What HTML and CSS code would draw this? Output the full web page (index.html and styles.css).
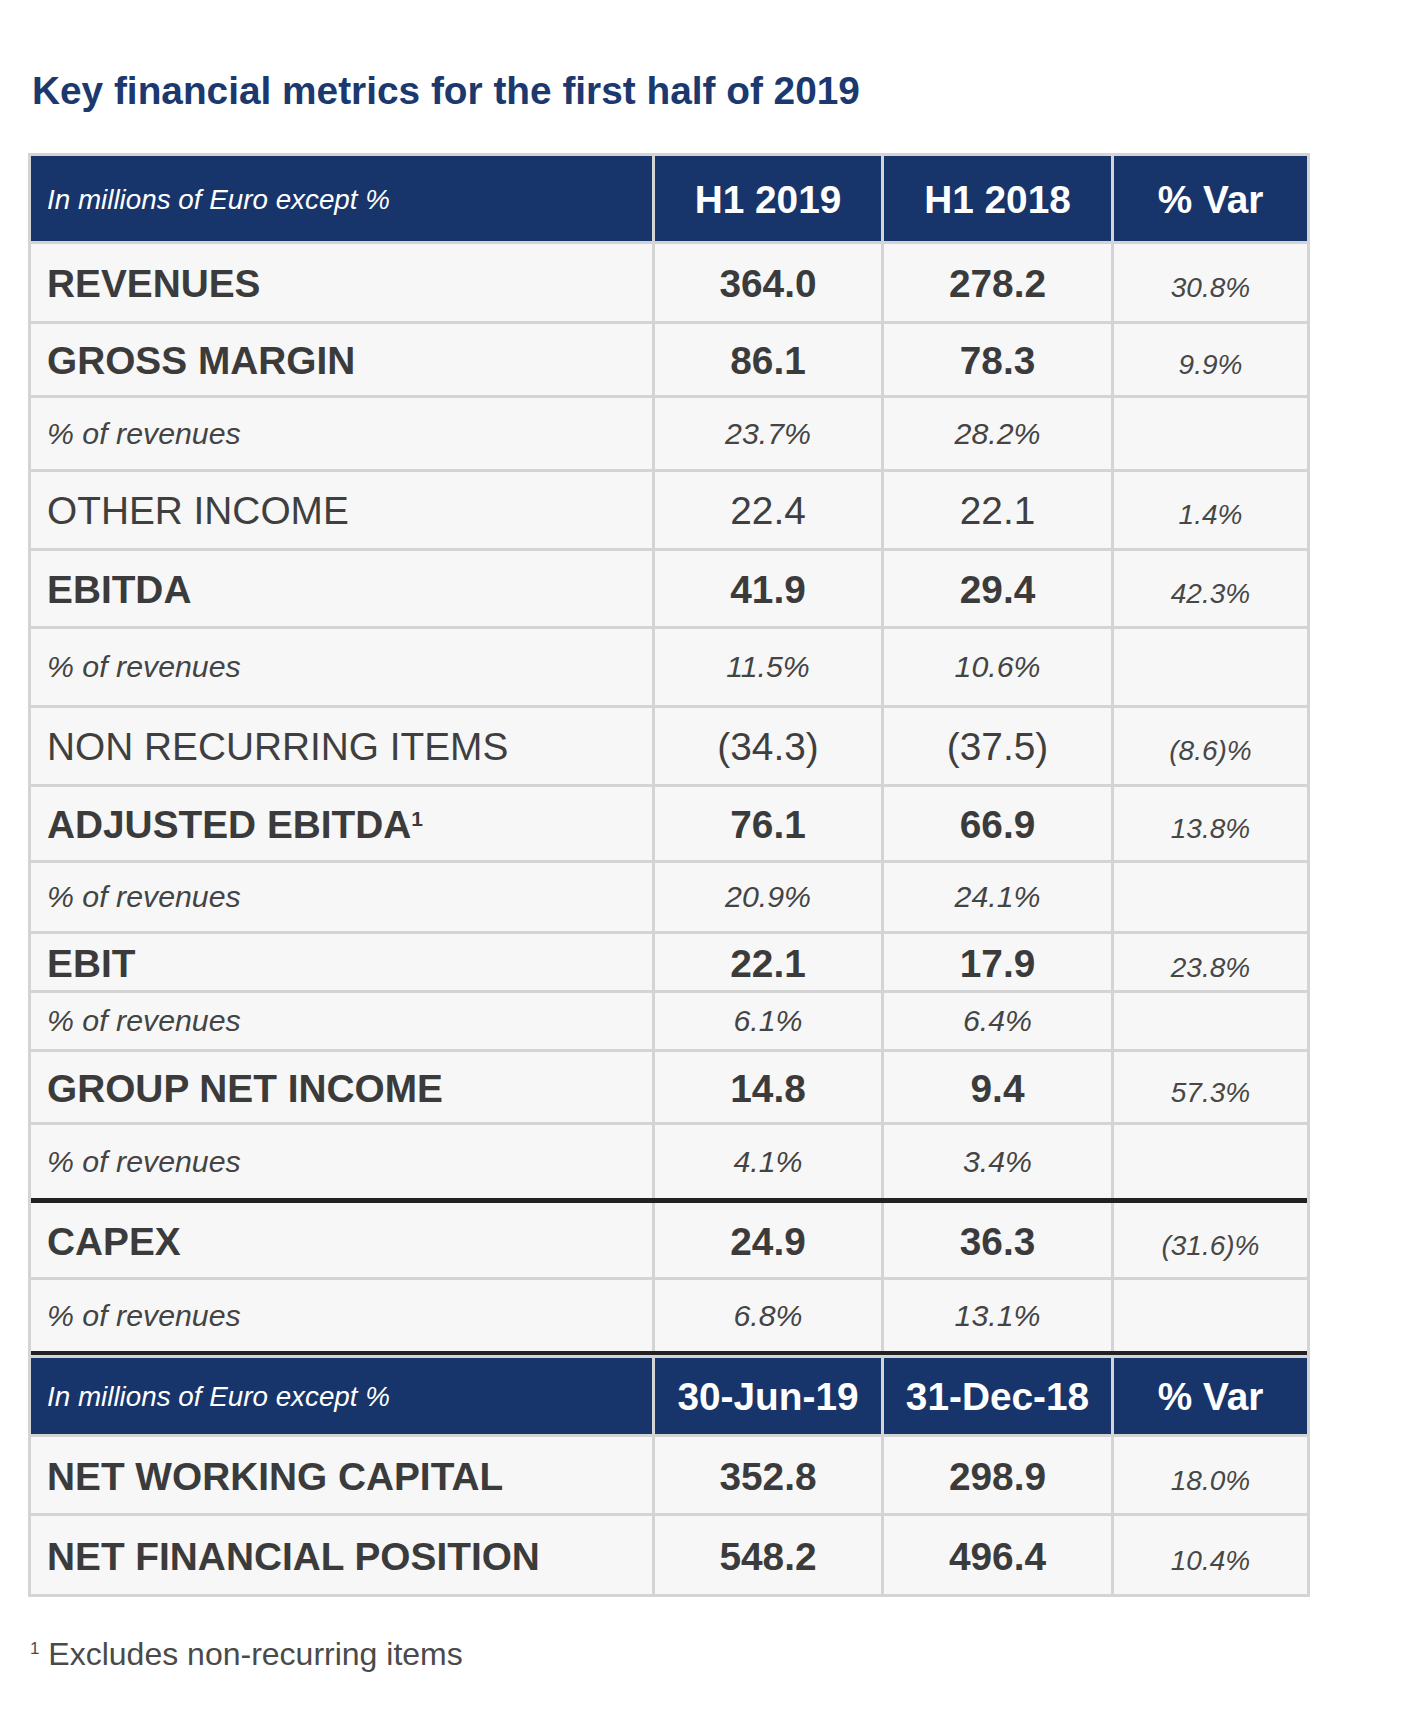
FILE: index.html
```html
<!DOCTYPE html>
<html lang="en">
<head>
<meta charset="utf-8">
<title>Key financial metrics for the first half of 2019</title>
<link rel="stylesheet" href="styles.css">
</head>
<body>
<main class="page">
  <h1 class="title">Key financial metrics for the first half of 2019</h1>
  <table class="metrics">
    <colgroup>
      <col class="c-label">
      <col class="c-val1">
      <col class="c-val2">
      <col class="c-var">
    </colgroup>
    <thead>
      <tr class="head h88">
        <th class="unit">In millions of Euro except %</th>
        <th>H1 2019</th>
        <th>H1 2018</th>
        <th>% Var</th>
      </tr>
    </thead>
    <tbody>
      <tr class="main h80"><td class="label">REVENUES</td><td>364.0</td><td>278.2</td><td class="var">30.8%</td></tr>
      <tr class="main h74"><td class="label">GROSS MARGIN</td><td>86.1</td><td>78.3</td><td class="var">9.9%</td></tr>
      <tr class="pct h74"><td class="label">% of revenues</td><td>23.7%</td><td>28.2%</td><td></td></tr>
      <tr class="plain h79"><td class="label">OTHER INCOME</td><td>22.4</td><td>22.1</td><td class="var">1.4%</td></tr>
      <tr class="main h78"><td class="label">EBITDA</td><td>41.9</td><td>29.4</td><td class="var">42.3%</td></tr>
      <tr class="pct h79"><td class="label">% of revenues</td><td>11.5%</td><td>10.6%</td><td></td></tr>
      <tr class="plain h79"><td class="label">NON RECURRING ITEMS</td><td>(34.3)</td><td>(37.5)</td><td class="var">(8.6)%</td></tr>
      <tr class="main h76"><td class="label">ADJUSTED EBITDA<sup class="note-ref">1</sup></td><td>76.1</td><td>66.9</td><td class="var">13.8%</td></tr>
      <tr class="pct h71"><td class="label">% of revenues</td><td>20.9%</td><td>24.1%</td><td></td></tr>
      <tr class="main h59"><td class="label">EBIT</td><td>22.1</td><td>17.9</td><td class="var">23.8%</td></tr>
      <tr class="pct h59"><td class="label">% of revenues</td><td>6.1%</td><td>6.4%</td><td></td></tr>
      <tr class="main h73"><td class="label">GROUP NET INCOME</td><td>14.8</td><td>9.4</td><td class="var">57.3%</td></tr>
      <tr class="pct h73 open"><td class="label">% of revenues</td><td>4.1%</td><td>3.4%</td><td></td></tr>
      <tr class="rule rule-5"><td colspan="4"></td></tr>
      <tr class="main h77"><td class="label">CAPEX</td><td>24.9</td><td>36.3</td><td class="var">(31.6)%</td></tr>
      <tr class="pct h71 open"><td class="label">% of revenues</td><td>6.8%</td><td>13.1%</td><td></td></tr>
      <tr class="rule rule-4"><td colspan="4"></td></tr>
      <tr class="head head2 h82">
        <th class="unit">In millions of Euro except %</th>
        <th>30-Jun-19</th>
        <th>31-Dec-18</th>
        <th>% Var</th>
      </tr>
      <tr class="main h79"><td class="label">NET WORKING CAPITAL</td><td>352.8</td><td>298.9</td><td class="var">18.0%</td></tr>
      <tr class="main h78 open"><td class="label">NET FINANCIAL POSITION</td><td>548.2</td><td>496.4</td><td class="var">10.4%</td></tr>
    </tbody>
  </table>
  <p class="footnote"><sup class="fn-mark">1</sup> Excludes non-recurring items</p>
</main>
</body>
</html>
```

FILE: styles.css
```css
html, body {
  margin: 0;
  padding: 0;
  background: #ffffff;
}

body {
  font-family: "Liberation Sans", Arial, sans-serif;
  color: #3c3c3c;
}

.page {
  padding: 69px 0 0 28px;
}

.title {
  margin: 0 0 40px 4px;
  font-size: 38.8px;
  font-weight: bold;
  color: #1b396e;
}

.metrics {
  width: 1282px;
  table-layout: fixed;
  border-collapse: separate;
  border-spacing: 0;
  border: 3px solid #d4d4d4;
}

.c-label { width: 624px; }
.c-val1 { width: 229px; }
.c-val2 { width: 230px; }
.c-var { width: 193px; }

.metrics th,
.metrics td {
  box-sizing: border-box;
  padding: 0;
  text-align: center;
  vertical-align: middle;
  background: #f7f7f7;
  border-right: 3px solid #d4d4d4;
  border-bottom: 3px solid #d4d4d4;
  white-space: nowrap;
}

.metrics tr > :last-child {
  border-right: none;
}

.h59 { height: 59px; }
.h71 { height: 71px; }
.h73 { height: 73px; }
.h74 { height: 74px; }
.h76 { height: 76px; }
.h77 { height: 77px; }
.h78 { height: 78px; }
.h79 { height: 79px; }
.h80 { height: 80px; }
.h82 { height: 82px; }
.h88 { height: 88px; }

.head th {
  background: #17356a;
  color: #ffffff;
  font-size: 38.8px;
  font-weight: bold;
  padding-top: 2px;
}

.head th.unit {
  text-align: left;
  padding-left: 16px;
  font-size: 27.8px;
  font-weight: normal;
  font-style: italic;
}

.head2 th {
  border-top: 3px solid #d4d4d4;
}

.metrics td.label {
  text-align: left;
  padding-left: 16px;
}

.main td {
  font-size: 38.8px;
  font-weight: bold;
  color: #3b3b3b;
  padding-top: 3px;
}

.plain td {
  font-size: 38.8px;
  font-weight: normal;
  color: #3f3f3f;
  padding-top: 1px;
}

.pct td {
  font-size: 30.3px;
  font-style: italic;
  color: #444444;
}

.metrics td.var {
  font-size: 28px;
  font-weight: normal;
  font-style: italic;
  color: #474747;
  padding-top: 9px;
}

.metrics .main td.var {
  padding-top: 11px;
}

.open td {
  border-bottom: none;
}

.rule td {
  padding: 0;
  border: none;
  background: #222222;
  font-size: 0;
  line-height: 0;
}

.rule-5 { height: 5px; }
.rule-4 { height: 4px; }

.note-ref {
  font-size: 21px;
  line-height: 0;
  vertical-align: 12px;
}

.footnote {
  margin: 39px 0 0 2px;
  font-size: 32px;
  color: #4a4a4a;
}

.fn-mark {
  font-size: 17px;
  line-height: 0;
  vertical-align: 11px;
}
```
